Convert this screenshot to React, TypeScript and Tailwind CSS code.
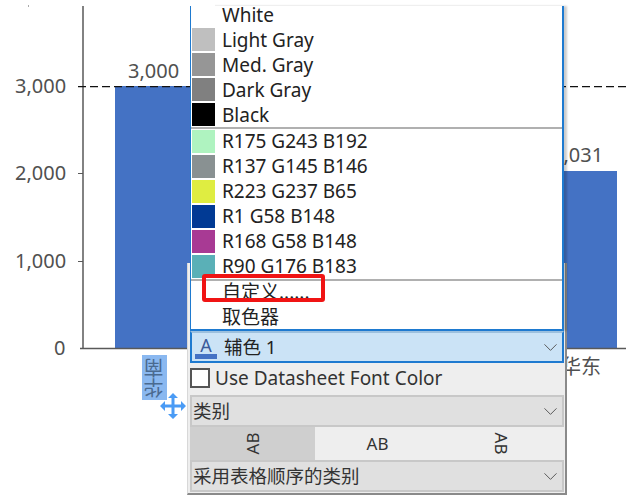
import React from 'react';
import { ChevronDown } from 'lucide-react';

const basicColors = [
  { name: 'White', color: '#ffffff' },
  { name: 'Light Gray', color: '#bfbfbf' },
  { name: 'Med. Gray', color: '#969696' },
  { name: 'Dark Gray', color: '#808080' },
  { name: 'Black', color: '#000000' },
];

const customColors = [
  { name: 'R175 G243 B192', color: '#aff3c0' },
  { name: 'R137 G145 B146', color: '#899192' },
  { name: 'R223 G237 B65', color: '#dfed41' },
  { name: 'R1 G58 B148', color: '#013a94' },
  { name: 'R168 G58 B148', color: '#a83a94' },
  { name: 'R90 G176 B183', color: '#5ab0b7' },
];

function ColorRow({ name, color }: { name: string; color: string }) {
  return (
    <div className="flex h-[25px] items-center">
      <div className="ml-px h-[23px] w-[23px]" style={{ backgroundColor: color }} />
      <span className="ml-[7px] whitespace-nowrap">{name}</span>
    </div>
  );
}

function Select({ label }: { label: string }) {
  return (
    <div className="flex h-[32px] items-center justify-between border-2 border-[#c8c8c8] bg-[#e0e0e0] pl-[1px] text-[18.5px] leading-none text-[#333]">
      <span>{label}</span>
      <ChevronDown size={23} strokeWidth={1} className="text-[#555]" />
    </div>
  );
}

function Chart() {
  return (
    <svg className="absolute left-0 top-0" width="626" height="497">
      <rect x="28" y="5" width="1" height="2" fill="#aaa" />
      <rect x="115" y="86" width="75" height="262" fill="#4472c4" />
      <rect x="560" y="171" width="57" height="177" fill="#4472c4" />
      <line x1="83" y1="6" x2="83" y2="349" stroke="#595959" strokeWidth="1.5" />
      <line x1="80" y1="348.5" x2="626" y2="348.5" stroke="#595959" strokeWidth="1.5" />
      <line x1="78" y1="86.5" x2="626" y2="86.5" stroke="#111" strokeWidth="1.25" strokeDasharray="8 4" />
      <line x1="78" y1="173.5" x2="83" y2="173.5" stroke="#595959" />
      <line x1="78" y1="261.5" x2="83" y2="261.5" stroke="#595959" />
    </svg>
  );
}

function AxisLabel({ className, children }: { className: string; children: React.ReactNode }) {
  return (
    <span className={`absolute whitespace-nowrap text-[20px] leading-none text-[#505050] ${className}`}>
      {children}
    </span>
  );
}

export default function App() {
  return (
    <div className="relative h-[497px] w-[626px] overflow-hidden bg-white font-['Noto_Sans','Noto_Sans_CJK_SC',sans-serif]">
      <Chart />
      <AxisLabel className="left-[15px] top-[76px] text-[19.5px]">3,000</AxisLabel>
      <AxisLabel className="left-[15px] top-[163px] text-[19.5px]">2,000</AxisLabel>
      <AxisLabel className="left-[15px] top-[251px] text-[19.5px]">1,000</AxisLabel>
      <AxisLabel className="left-[54px] top-[338px] text-[19.5px]">0</AxisLabel>
      <AxisLabel className="left-[128px] top-[61px]">3,000</AxisLabel>
      <AxisLabel className="left-[552px] top-[145px]">2,031</AxisLabel>
      <AxisLabel className="left-[561px] top-[357px]">华东</AxisLabel>

      {/* selected axis label, upside down */}
      <div className="absolute left-[142px] top-[355px] flex h-[45px] w-[25px] items-center justify-center bg-[#8ab8f0]">
        <span className="rotate-180 whitespace-nowrap text-[20px] leading-none text-[#4a6a90] [writing-mode:vertical-rl]">
          华南
        </span>
      </div>
      <svg className="absolute left-[159px] top-[392px]" width="28" height="28" viewBox="0 0 28 28" fill="#4a9bf5">
        <path d="M14 1l5 5h-3.500v6.500H22V9l5 5-5 5v-3.500h-6.500V22H19l-5 5-5-5h3.500v-6.500H6V19l-5-5 5-5v3.500h6.500V6H9z" />
      </svg>

      {/* format panel */}
      <div className="absolute left-[187px] top-[263px] h-[232px] w-[380px] border-b-2 border-l border-r-2 border-b-[#8a8a8a] border-l-[#d8d8d8] border-r-[#8a8a8a] bg-[#eeeeee]" />

      <div className="absolute left-[190px] top-[6px] flex w-[374px] flex-col text-[19px] leading-none text-[#222]">
        <div className="h-[325px] border-b-2 border-l border-r-2 border-b-[#1e7ad0] border-l-[#1e7ad0] border-r-[#1e7ad0] bg-white shadow-[3px_0_2px_rgba(0,0,0,0.2)]">
          <div className="flex h-[121px] flex-col [&_span]:pt-[2px]">
            <div className="-mt-[4px]">
              {basicColors.map((c) => (
                <ColorRow key={c.name} name={c.name} color={c.color} />
              ))}
            </div>
          </div>
          <div className="h-[154px] border-y-2 border-[#b0b0b0]">
            {customColors.map((c) => (
              <ColorRow key={c.name} name={c.name} color={c.color} />
            ))}
          </div>
          <div className="flex h-[25px] items-center pb-[2px] pl-[31px]">自定义......</div>
          <div className="flex h-[23px] items-center pl-[31px]">取色器</div>
        </div>

        <div className="flex h-[32px] items-center justify-between border-2 border-[#1e7ad0] border-t-[#9cc0de] bg-[#cbe3f6] pl-[3px]">
          <div className="flex items-center">
            <div className="flex w-[22px] flex-col items-center text-[18px] leading-[20px] text-[#3a5a9a]">
              <span className="h-[19px]">A</span>
              <div className="h-[5px] w-[22px] bg-[#4472c4]" />
            </div>
            <span className="ml-[7px] text-[18.5px]">辅色 1</span>
          </div>
          <ChevronDown size={23} strokeWidth={1} className="text-[#555]" />
        </div>

        <div className="flex h-[32px] items-center gap-[5px] pb-[2px]">
          <div className="h-[20px] w-[20px] border-2 border-[#555] bg-white" />
          <span className="text-[#333]">Use Datasheet Font Color</span>
        </div>

        <div className="flex flex-col">
          <Select label="类别" />
          <div className="flex h-[33px] items-center text-[17px] text-[#333]">
            <div className="flex h-full w-[125px] items-center justify-center bg-[#cfcfcf]">
              <span className="-rotate-90">AB</span>
            </div>
            <div className="flex h-full w-[125px] items-center justify-center">AB</div>
            <div className="flex h-full w-[124px] items-center justify-center">
              <span className="rotate-90">AB</span>
            </div>
          </div>
          <Select label="采用表格顺序的类别" />
        </div>
      </div>

      {/* red annotation */}
      <div className="absolute left-[202px] top-[274px] h-[28px] w-[123px] rounded-[3px] border-4 border-[#f01414]" />
    </div>
  );
}
